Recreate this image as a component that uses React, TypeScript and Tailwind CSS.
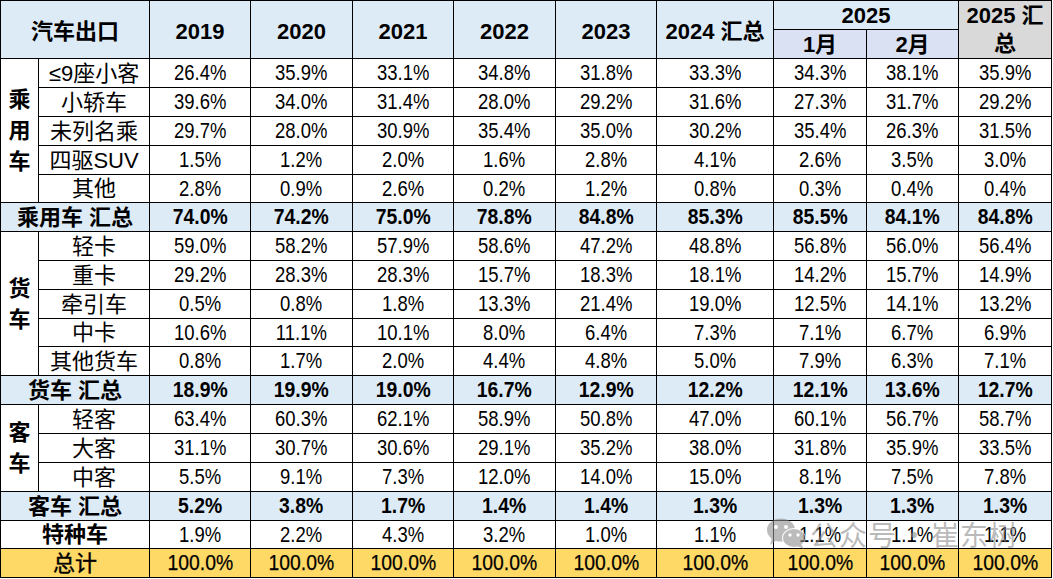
import React from "react";

type Row = { label: string; vals: string[] };

const passenger: Row[] = [
  { label: "≤9座小客", vals: ["26.4", "35.9", "33.1", "34.8", "31.8", "33.3", "34.3", "38.1", "35.9"] },
  { label: "小轿车", vals: ["39.6", "34.0", "31.4", "28.0", "29.2", "31.6", "27.3", "31.7", "29.2"] },
  { label: "未列名乘", vals: ["29.7", "28.0", "30.9", "35.4", "35.0", "30.2", "35.4", "26.3", "31.5"] },
  { label: "四驱SUV", vals: ["1.5", "1.2", "2.0", "1.6", "2.8", "4.1", "2.6", "3.5", "3.0"] },
  { label: "其他", vals: ["2.8", "0.9", "2.6", "0.2", "1.2", "0.8", "0.3", "0.4", "0.4"] },
];
const passengerSum = ["74.0", "74.2", "75.0", "78.8", "84.8", "85.3", "85.5", "84.1", "84.8"];

const trucks: Row[] = [
  { label: "轻卡", vals: ["59.0", "58.2", "57.9", "58.6", "47.2", "48.8", "56.8", "56.0", "56.4"] },
  { label: "重卡", vals: ["29.2", "28.3", "28.3", "15.7", "18.3", "18.1", "14.2", "15.7", "14.9"] },
  { label: "牵引车", vals: ["0.5", "0.8", "1.8", "13.3", "21.4", "19.0", "12.5", "14.1", "13.2"] },
  { label: "中卡", vals: ["10.6", "11.1", "10.1", "8.0", "6.4", "7.3", "7.1", "6.7", "6.9"] },
  { label: "其他货车", vals: ["0.8", "1.7", "2.0", "4.4", "4.8", "5.0", "7.9", "6.3", "7.1"] },
];
const truckSum = ["18.9", "19.9", "19.0", "16.7", "12.9", "12.2", "12.1", "13.6", "12.7"];

const buses: Row[] = [
  { label: "轻客", vals: ["63.4", "60.3", "62.1", "58.9", "50.8", "47.0", "60.1", "56.7", "58.7"] },
  { label: "大客", vals: ["31.1", "30.7", "30.6", "29.1", "35.2", "38.0", "31.8", "35.9", "33.5"] },
  { label: "中客", vals: ["5.5", "9.1", "7.3", "12.0", "14.0", "15.0", "8.1", "7.5", "7.8"] },
];
const busSum = ["5.2", "3.8", "1.7", "1.4", "1.4", "1.3", "1.3", "1.3", "1.3"];
const special = ["1.9", "2.2", "4.3", "3.2", "1.0", "1.1", "1.1", "1.1", "1.1"];

function Cell({ children, className = "" }: { children?: React.ReactNode; className?: string }) {
  return (
    <div className={"flex items-center justify-center border-r border-b border-black overflow-hidden " + className}>
      {children}
    </div>
  );
}

function Num({ v }: { v: string }) {
  return <span className="inline-block scale-x-[0.84] text-[22px] leading-none">{v}%</span>;
}
function BoldNum({ v }: { v: string }) {
  return <span className="inline-block scale-x-[0.88] text-[22px] leading-none font-bold">{v}%</span>;
}
function TotalNum({ v }: { v: string }) {
  return (
    <span className="inline-block scale-x-[0.88] text-[22px] leading-none [-webkit-text-stroke:0.25px_black]">{v}%</span>
  );
}

function Group({ chars }: { chars: string[] }) {
  return (
    <div className="flex flex-col items-center text-[22px] leading-[31px] font-bold">
      {chars.map((c, i) => (
        <span key={i}>{c}</span>
      ))}
    </div>
  );
}

function DataRows({ rows }: { rows: Row[] }) {
  return (
    <>
      {rows.map((r, i) => (
        <React.Fragment key={i}>
          <Cell className="text-[22px]">{r.label}</Cell>
          {r.vals.map((v, j) => (
            <Cell key={j}>
              <Num v={v} />
            </Cell>
          ))}
        </React.Fragment>
      ))}
    </>
  );
}

function SumRow({ label, vals }: { label: string; vals: string[] }) {
  return (
    <>
      <Cell className="col-span-2 bg-[#ddebf7] text-[22px] font-bold">{label}</Cell>
      {vals.map((v, j) => (
        <Cell key={j} className="bg-[#ddebf7]">
          <BoldNum v={v} />
        </Cell>
      ))}
    </>
  );
}

export default function App() {
  return (
    <div className="relative w-[1053px] h-[579px] bg-white text-black font-['Liberation_Sans','Noto_Sans_CJK_SC',sans-serif]">
      <div className="grid w-[1052px] border-l border-t border-black grid-cols-[38px_111px_101px_102px_101px_102px_101px_117px_93px_92px_93px] grid-rows-[29px_29px_29px_29px_29px_29px_28px_29px_29px_29px_29px_28px_29px_29px_29px_29px_29px_29px_28px_29px]">
        {/* header */}
        <Cell className="col-span-2 row-span-2 bg-[#ddebf7] text-[22px] font-bold pt-[3px]">汽车出口</Cell>
        {["2019", "2020", "2021", "2022", "2023"].map((y) => (
          <Cell key={y} className="row-span-2 bg-[#ddebf7] text-[22px] font-bold pt-[3px]">
            {y}
          </Cell>
        ))}
        <Cell className="row-span-2 bg-[#ddebf7] text-[22px] font-bold pt-[3px]">2024 汇总</Cell>
        <Cell className="col-span-2 bg-[#ddebf7] text-[22px] font-bold">2025</Cell>
        <Cell className="row-span-2 bg-[#d9d9d9] text-[22px] font-bold leading-[28px] text-center">
          <span>
            2025 汇<br />总
          </span>
        </Cell>
        <Cell className="bg-[#d9e1f2] text-[22px] font-bold">1月</Cell>
        <Cell className="bg-[#d9e1f2] text-[22px] font-bold">2月</Cell>

        {/* passenger */}
        <Cell className="row-span-5">
          <Group chars={["乘", "用", "车"]} />
        </Cell>
        <DataRows rows={passenger} />
        <SumRow label="乘用车 汇总" vals={passengerSum} />

        {/* trucks */}
        <Cell className="row-span-5">
          <Group chars={["货", "车"]} />
        </Cell>
        <DataRows rows={trucks} />
        <SumRow label="货车 汇总" vals={truckSum} />

        {/* buses */}
        <Cell className="row-span-3">
          <Group chars={["客", "车"]} />
        </Cell>
        <DataRows rows={buses} />
        <SumRow label="客车 汇总" vals={busSum} />

        {/* special */}
        <Cell className="col-span-2 text-[22px] font-bold">特种车</Cell>
        {special.map((v, j) => (
          <Cell key={j}>
            <Num v={v} />
          </Cell>
        ))}

        {/* total */}
        <Cell className="col-span-2 bg-[#ffd966] text-[22px] [-webkit-text-stroke:0.4px_black]">总计</Cell>
        {Array.from({ length: 9 }).map((_, j) => (
          <Cell key={j} className="bg-[#ffd966]">
            <TotalNum v="100.0" />
          </Cell>
        ))}
      </div>

      {/* watermark */}
      <div className="absolute left-[766px] top-[518px] flex items-center pointer-events-none">
        <svg width="42" height="32" viewBox="0 0 42 32" className="opacity-60">
          <ellipse cx="15" cy="12" rx="14" ry="11.5" fill="#8f8f8f" />
          <path d="M6 20 L4 27 L11 22 Z" fill="#8f8f8f" />
          <circle cx="10" cy="9" r="2" fill="#ffffff" />
          <circle cx="20" cy="9" r="2" fill="#ffffff" />
          <ellipse cx="28" cy="20" rx="12" ry="10" fill="#ffffff" />
          <ellipse cx="28" cy="20" rx="11" ry="9" fill="#8f8f8f" />
          <path d="M35 26 L38 31 L31 28 Z" fill="#8f8f8f" />
          <circle cx="24" cy="17" r="1.7" fill="#ffffff" />
          <circle cx="32" cy="17" r="1.7" fill="#ffffff" />
        </svg>
        <div className="ml-[2px] flex items-center text-[28px] leading-[32px] text-[#8c8c8c]/60 font-['Noto_Sans_CJK_SC',sans-serif]">
          <span className="tracking-[1px]">公众号</span>
          <span className="w-[34px] text-center">·</span>
          <span className="tracking-[1px]">崔东树</span>
        </div>
      </div>
    </div>
  );
}
